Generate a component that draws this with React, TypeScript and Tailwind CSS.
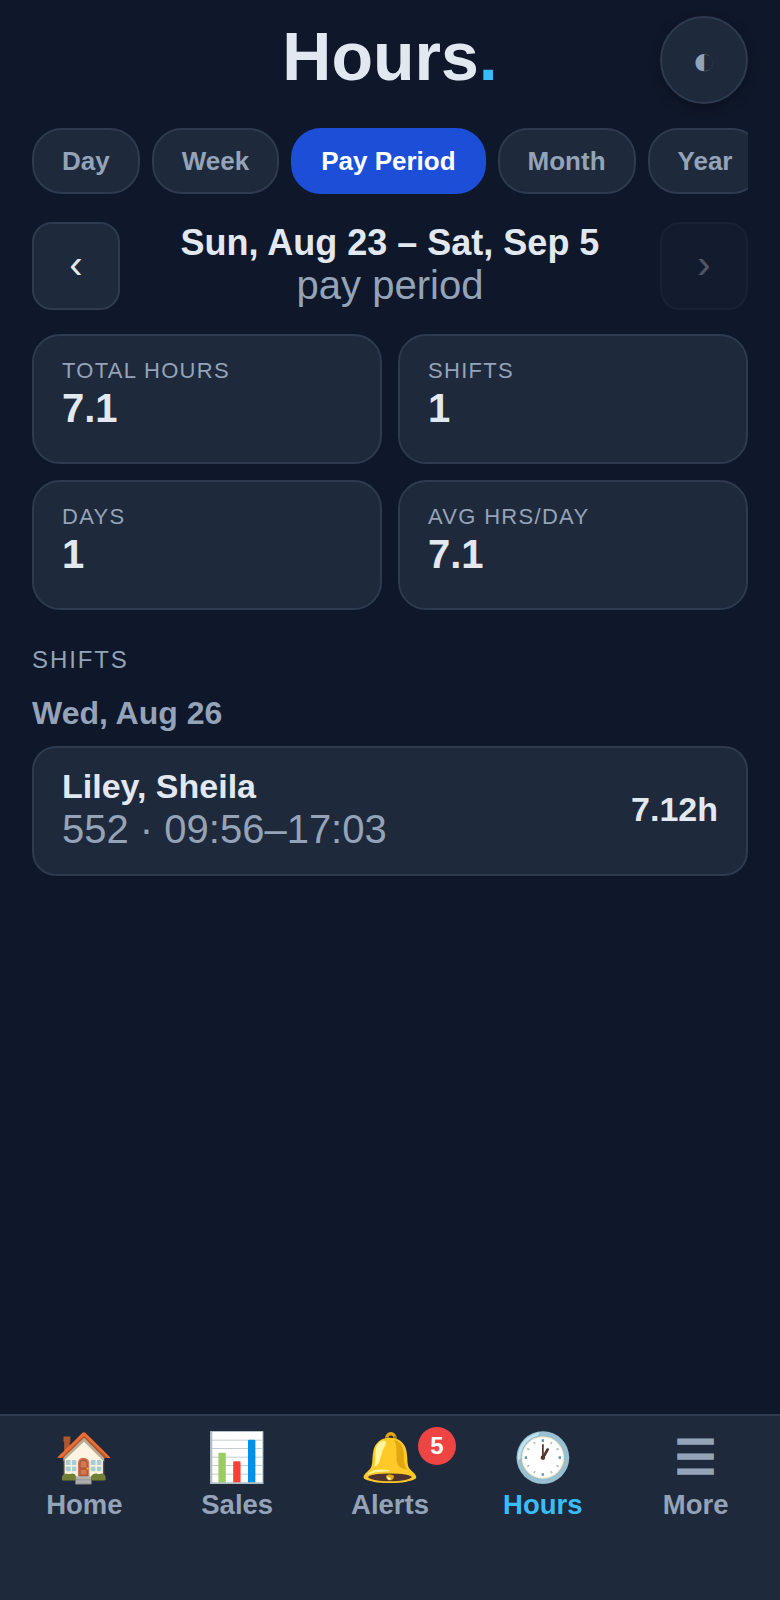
const tabs = ['Day', 'Week', 'Pay Period', 'Month', 'Year'];

const stats = [
  { label: 'Total Hours', value: '7.1' },
  { label: 'Shifts', value: '1' },
  { label: 'Days', value: '1' },
  { label: 'Avg Hrs/Day', value: '7.1' },
];

const navItems = [
  { icon: '🏠', label: 'Home' },
  { icon: '📊', label: 'Sales' },
  { icon: '🔔', label: 'Alerts', badge: 5 },
  { icon: '🕐', label: 'Hours', active: true },
  { icon: '☰', label: 'More' },
];

export default function App() {
  return (
    <div className="flex h-[1600px] w-[780px] flex-col overflow-hidden bg-[#0f172a] font-['Liberation_Sans',sans-serif] text-[#e2e8f0]">
      <main className="flex-1 px-8 pt-4">
        <header className="relative flex h-[88px] items-center justify-center">
          <h1 className="-mt-2 text-[68px] font-bold leading-none">
            Hours<span className="text-[#38bdf8]">.</span>
          </h1>
          <button className="absolute right-0 top-0 flex h-[88px] w-[88px] items-center justify-center rounded-full border-2 border-[#2d3a4f] bg-[#1e293b] text-[40px] text-[#94a3b8] shadow-[0_4px_12px_rgba(0,0,0,0.3)]">
            ◐
          </button>
        </header>

        <div className="mt-6 flex gap-3 overflow-hidden">
          {tabs.map((tab) => (
            <div
              key={tab}
              className={
                tab === 'Pay Period'
                  ? 'shrink-0 rounded-[30px] border-2 border-[#1d4ed8] bg-[#1d4ed8] px-7 py-4 text-[26px] font-bold leading-[30px] text-white'
                  : 'shrink-0 rounded-[30px] border-2 border-[#2d3a4f] bg-[#1e293b] px-7 py-4 text-[26px] font-bold leading-[30px] text-[#94a3b8]'
              }
            >
              {tab}
            </div>
          ))}
        </div>

        <div className="mt-7 flex items-center justify-between">
          <button className="flex h-[88px] w-[88px] items-center justify-center rounded-[20px] border-2 border-[#2d3a4f] bg-[#1e293b] pb-1 text-[40px] text-[#e2e8f0]">
            ‹
          </button>
          <div className="pb-1 text-center">
            <div className="text-[36px] font-bold leading-[42px]">Sun, Aug 23 – Sat, Sep 5</div>
            <div className="text-[40px] leading-[42px] text-[#94a3b8]">pay period</div>
          </div>
          <button className="flex h-[88px] w-[88px] items-center justify-center rounded-[20px] border-2 border-[#2d3a4f] bg-[#1e293b] pb-1 text-[40px] text-[#e2e8f0] opacity-30">
            ›
          </button>
        </div>

        <div className="mt-6 grid grid-cols-2 gap-4">
          {stats.map((stat) => (
            <div key={stat.label} className="h-[130px] rounded-[28px] border-2 border-[#2d3a4f] bg-[#1e293b] px-7 pt-[22px]">
              <div className="text-[22px] uppercase leading-[26px] tracking-[1.3px] text-[#94a3b8]">{stat.label}</div>
              <div className="text-[40px] font-bold leading-[48px] text-[#e2e8f0]">{stat.value}</div>
            </div>
          ))}
        </div>

        <div className="mt-9 text-[24px] uppercase leading-[28px] tracking-[1.9px] text-[#94a3b8]">Shifts</div>
        <div className="mt-5 text-[32px] font-bold leading-[38px] text-[#94a3b8]">Wed, Aug 26</div>

        <div className="mt-[14px] flex h-[130px] items-center justify-between rounded-[24px] border-2 border-[#2d3a4f] bg-[#1e293b] px-7 pb-1">
          <div>
            <div className="text-[34px] font-bold leading-[40px] text-[#e2e8f0]">Liley, Sheila</div>
            <div className="text-[40px] leading-[46px] text-[#94a3b8]">552 · 09:56–17:03</div>
          </div>
          <div className="text-[34px] font-bold text-[#e2e8f0]">7.12h</div>
        </div>
      </main>

      <nav className="flex h-[186px] shrink-0 border-t-2 border-[#2d3a4f] bg-[#1e293b] px-[8px] pt-[11px]">
        {navItems.map((item) => (
          <div key={item.label} className="flex flex-1 flex-col items-center">
            <div className="relative text-[48px] font-bold leading-[62px] text-[#94a3b8]">
              {item.icon}
              {item.badge ? (
                <span className="absolute -right-[36px] top-0 flex h-[38px] min-w-[38px] items-center justify-center rounded-full bg-[#ef4444] text-[24px] font-bold leading-none text-white">
                  {item.badge}
                </span>
              ) : null}
            </div>
            <div className={item.active ? 'text-[27.5px] font-bold leading-[32px] text-[#38bdf8]' : 'text-[27.5px] font-bold leading-[32px] text-[#94a3b8]'}>
              {item.label}
            </div>
          </div>
        ))}
      </nav>
    </div>
  );
}
